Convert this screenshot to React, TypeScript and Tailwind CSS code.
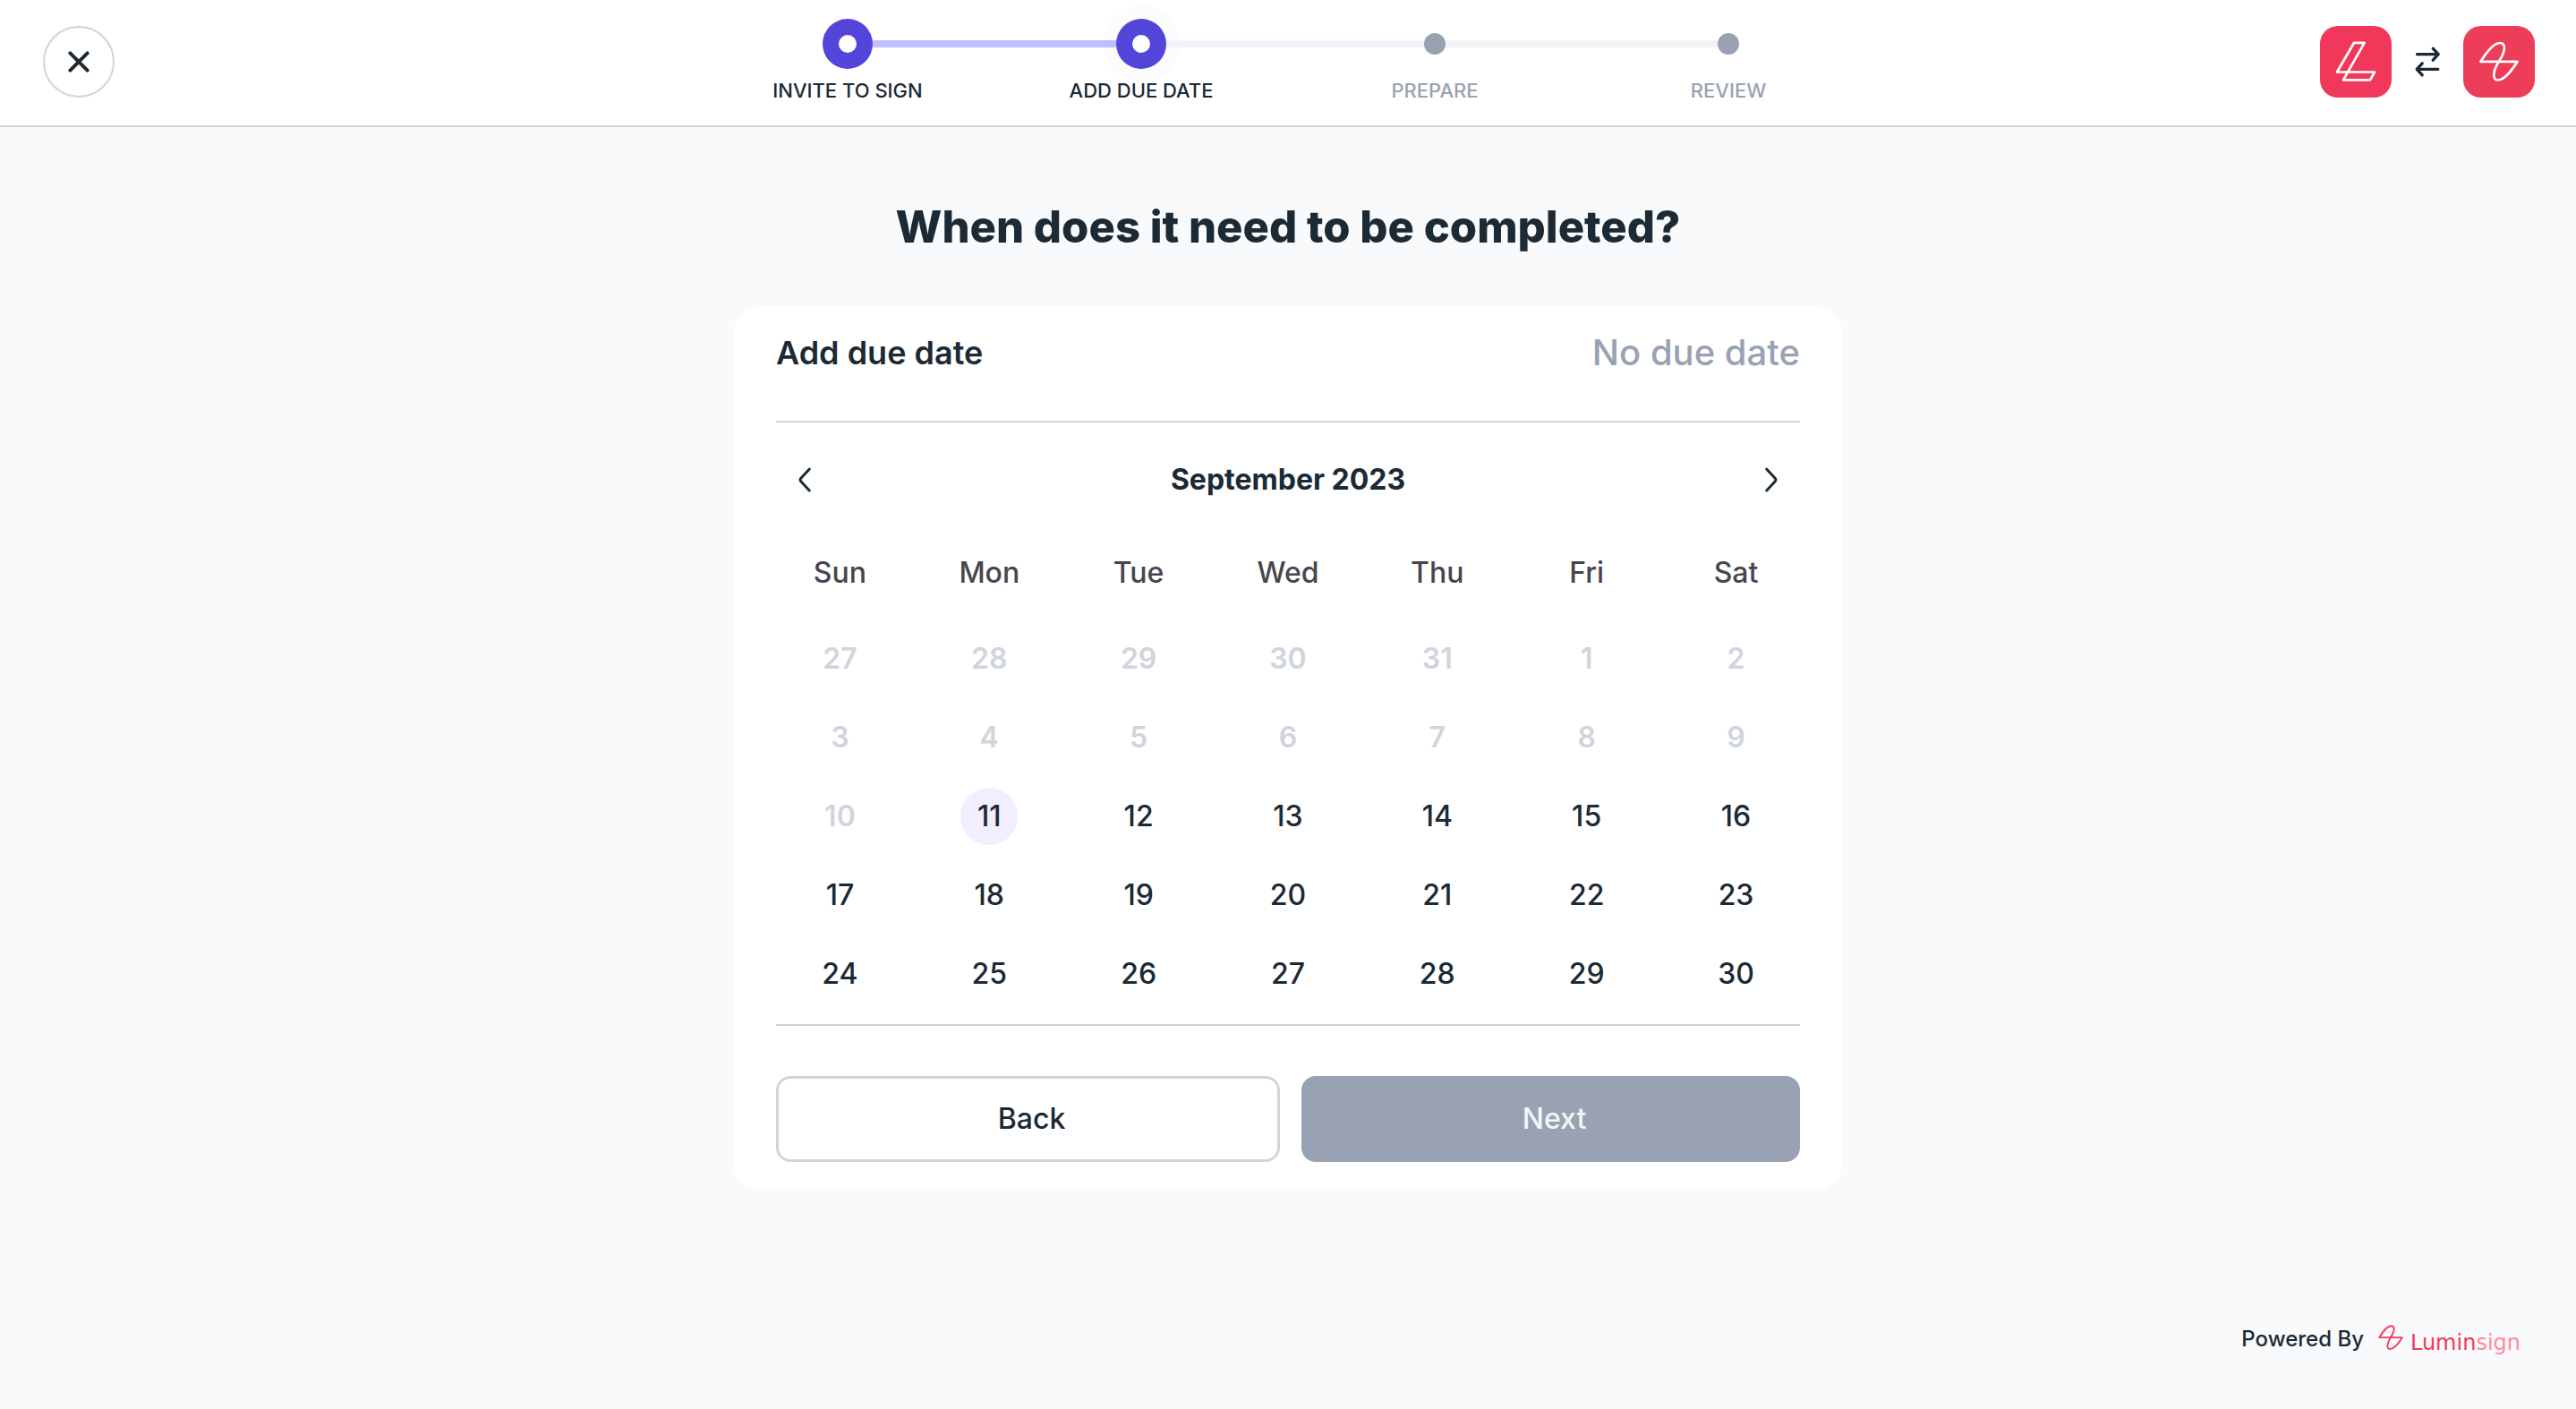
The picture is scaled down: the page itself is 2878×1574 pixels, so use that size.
const STEPS = [
  { label: 'INVITE TO SIGN', active: true, current: false, before: 'invisible', after: 'bg-[#c2bfff]' },
  { label: 'ADD DUE DATE', active: true, current: true, before: 'bg-[#c2bfff]', after: 'bg-[#eff3f7]' },
  { label: 'PREPARE', active: false, current: false, before: 'bg-[#eff3f7]', after: 'bg-[#f2f3f7]' },
  { label: 'REVIEW', active: false, current: false, before: 'bg-[#f2f3f7]', after: 'invisible' },
];

const WEEKDAYS = ['Sun', 'Mon', 'Tue', 'Wed', 'Thu', 'Fri', 'Sat'];

const WEEKS = [
  [27, 28, 29, 30, 31, 1, 2],
  [3, 4, 5, 6, 7, 8, 9],
  [10, 11, 12, 13, 14, 15, 16],
  [17, 18, 19, 20, 21, 22, 23],
  [24, 25, 26, 27, 28, 29, 30],
];

const TODAY = { week: 2, weekday: 1 };

const SIGN_PATH =
  'M19.5 39.8 H60.5 C54.5 49.5 45.5 60.5 38.5 60.5 C32 60.5 33.4 49.5 39.8 39.8 C46.5 30 48.8 19 41 19 C34 19 25 30.5 19.5 39.8 Z';

function Stepper() {
  return (
    <ol className="grid grid-cols-4">
      {STEPS.map((step) => (
        <li key={step.label} className="flex flex-col items-center" aria-current={step.current ? 'step' : undefined}>
          <div className="flex h-14 w-full items-center">
            <span className={`h-2 flex-1 ${step.before}`} />
            {step.active ? (
              <span
                className={`flex size-14 items-center justify-center rounded-full bg-[#5345d9] ${
                  step.current ? 'shadow-[0_0_0_15px_rgba(0,0,0,0.012)]' : ''
                }`}
              >
                <span className="size-5 rounded-full bg-white" />
              </span>
            ) : (
              <span className="size-6 rounded-full bg-[#99a2b3]" />
            )}
            <span className={`h-2 flex-1 ${step.after}`} />
          </div>
          <span
            className={`mt-2.5 text-[22px] leading-7 font-medium ${step.active ? 'text-[#1b2a34]' : 'text-[#99a2b3]'}`}
          >
            {step.label}
          </span>
        </li>
      ))}
    </ol>
  );
}

function Header() {
  return (
    <header className="grid grid-cols-[1fr_minmax(0,1312px)_1fr] border-b-2 border-[#d0d5dd] bg-white pt-[21px] pb-[25px]">
      <button
        type="button"
        aria-label="Close"
        className="mt-2 ml-12 flex size-20 items-center justify-center rounded-full border-2 border-[#d0d3e0]"
      >
        <svg viewBox="0 0 24 24" className="size-6" fill="none" stroke="#1b2a34" strokeWidth="4" strokeLinecap="round">
          <path d="M2.4 2.4 L21.6 21.6 M21.6 2.4 L2.4 21.6" />
        </svg>
      </button>
      <Stepper />
      <div className="mt-2 mr-[46px] flex items-start justify-end gap-4">
        <a href="#lumin" aria-label="Lumin" className="size-20 rounded-[20px] bg-[#f2385a]">
          <svg viewBox="0 0 80 80" fill="none" stroke="#fff" strokeWidth="2.7" strokeLinejoin="round">
            <path d="M38 18.8 H49.6 L26 60.3 H56 L61 51.5 H19 Z" />
          </svg>
        </a>
        <svg
          viewBox="0 0 48 48"
          className="mt-4 size-12"
          fill="none"
          stroke="#1b2a34"
          strokeWidth="3.3"
          strokeLinecap="round"
          strokeLinejoin="round"
        >
          <path d="M12.5 15.7 H36 M30.2 9.2 L36.2 15.7 L30.2 22.2 M35.8 32.3 H12.5 M18.2 25.8 L12.2 32.3 L18.2 38.8" />
        </svg>
        <a href="#sign" aria-label="Luminsign" className="size-20 rounded-[20px] bg-[#ee3d59]">
          <svg viewBox="0 0 80 80" fill="none" stroke="#fff" strokeWidth="2.7" strokeLinejoin="round">
            <path d={SIGN_PATH} />
          </svg>
        </a>
      </div>
    </header>
  );
}

function Chevron({ d }: { d: string }) {
  return (
    <svg
      viewBox="0 0 32 32"
      className="size-8"
      fill="none"
      stroke="#1b2a34"
      strokeWidth="3"
      strokeLinecap="round"
      strokeLinejoin="round"
    >
      <path d={d} />
    </svg>
  );
}

function Calendar() {
  return (
    <div className="border-y-2 border-[#d0d3e0] pt-8 pb-3">
      <div className="flex h-16 items-center justify-between">
        <button type="button" aria-label="Previous month" className="flex size-16 items-center justify-center">
          <Chevron d="M21.3 4 L11.8 14.2 Q10.4 16 11.8 17.8 L21.3 28" />
        </button>
        <h3 className="text-[32px] font-bold">September 2023</h3>
        <button type="button" aria-label="Next month" className="flex size-16 items-center justify-center">
          <Chevron d="M10.7 4 L20.2 14.2 Q21.6 16 20.2 17.8 L10.7 28" />
        </button>
      </div>
      <div className="-mx-3 mt-5">
        <table className="w-full table-fixed text-center text-[32px]">
          <thead>
            <tr className="h-[104px] text-[#47464f]">
              {WEEKDAYS.map((day) => (
                <th key={day} scope="col" className="p-0 font-medium">
                  {day}
                </th>
              ))}
            </tr>
          </thead>
          <tbody>
            {WEEKS.map((week, w) => (
              <tr key={w} className="h-[88px]">
                {week.map((day, d) => {
                  const past = w < TODAY.week || (w === TODAY.week && d < TODAY.weekday);
                  const today = w === TODAY.week && d === TODAY.weekday;
                  return (
                    <td key={d} className="p-0">
                      <button
                        type="button"
                        disabled={past}
                        className={`mx-auto flex size-16 items-center justify-center rounded-full ${
                          today ? 'bg-[#f2edff]' : ''
                        } ${past ? 'font-semibold text-[#d0d5dd]' : 'font-medium text-[#1b2a34]'}`}
                      >
                        {day}
                      </button>
                    </td>
                  );
                })}
              </tr>
            ))}
          </tbody>
        </table>
      </div>
    </div>
  );
}

export default function App() {
  return (
    <div className="flex min-h-screen flex-col bg-[#f9fafc] font-['Inter',sans-serif] text-[#1b2a34]">
      <Header />
      <main className="flex flex-col items-center px-8 pt-20 pb-16">
        <h1 className="text-[49px] leading-[64px] font-extrabold">When does it need to be completed?</h1>
        <section className="mt-14 w-full max-w-[1240px] rounded-[32px] bg-white px-12 pt-7 pb-8">
          <div className="flex items-center justify-between pb-[52px] leading-[48px]">
            <h2 className="text-[36px] font-semibold">Add due date</h2>
            <span className="text-[40px] font-medium text-[#99a2b3]">No due date</span>
          </div>
          <Calendar />
          <div className="mt-14 flex h-24 gap-6 text-[32px]">
            <button type="button" className="flex-1 rounded-2xl border-3 border-[#d0d5dd] pl-2 font-medium">
              Back
            </button>
            <button type="button" disabled className="flex-1 rounded-2xl bg-[#99a2b3] pl-2 font-medium text-[#f2f5f8]">
              Next
            </button>
          </div>
        </section>
      </main>
      <footer className="mt-auto flex items-start justify-end gap-4 pr-[62px] pb-[58px]">
        <span className="text-[24px] leading-8 font-medium">Powered By</span>
        <a href="#luminsign" className="flex items-baseline gap-2 text-[#f2385a]">
          <svg viewBox="18 17 44 45" className="size-7" fill="none" stroke="currentColor" strokeWidth="3" strokeLinejoin="round">
            <path d={SIGN_PATH} />
          </svg>
          <span className="text-[24px] leading-8 [font-family:'DejaVu_Sans',sans-serif]">
            Lumin<span className="text-[#ff8a9f]">sign</span>
          </span>
        </a>
      </footer>
    </div>
  );
}
